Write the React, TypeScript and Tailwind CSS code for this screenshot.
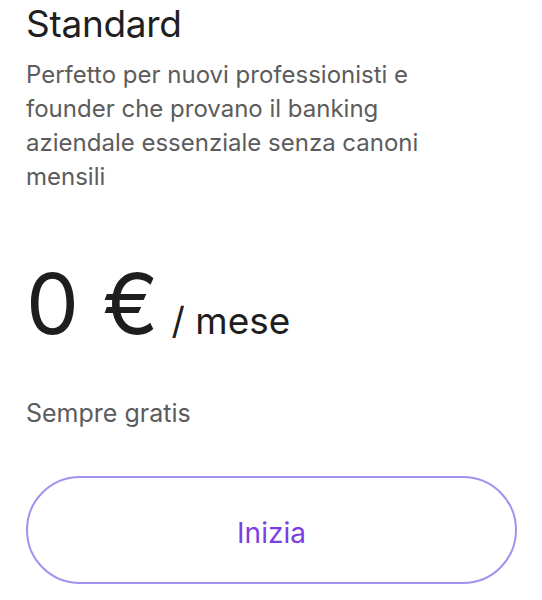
export default function App() {
  return (
    <div className="w-[542px] h-[600px] bg-white pl-[26px] pr-[25px] pt-[2px] font-['Inter',sans-serif]">
      <h2 className="text-[37px] leading-[44px] text-[#1f1f1f] tracking-[-0.3px]">Standard</h2>
      <p className="mt-[12px] w-[450px] text-[24px] leading-[34px] text-[#5c5c5c]">
        Perfetto per nuovi professionisti e founder che provano il banking aziendale essenziale senza canoni mensili
      </p>
      <div className="mt-[68px] flex items-baseline">
        <span className="text-[84px] leading-[84px] text-[#1e1e1e]">0 €</span>
        <span className="ml-[13px] text-[37px] text-[#1e1e1e]">/ mese</span>
      </div>
      <p className="mt-[48px] text-[25px] leading-[32px] text-[#5c5c5c]">Sempre gratis</p>
      <button className="mt-[47px] w-[491px] h-[108px] rounded-full border-2 border-[#a690ef] pt-[6px] text-[28px] text-[#7b3fe4]">
        Inizia
      </button>
    </div>
  );
}
